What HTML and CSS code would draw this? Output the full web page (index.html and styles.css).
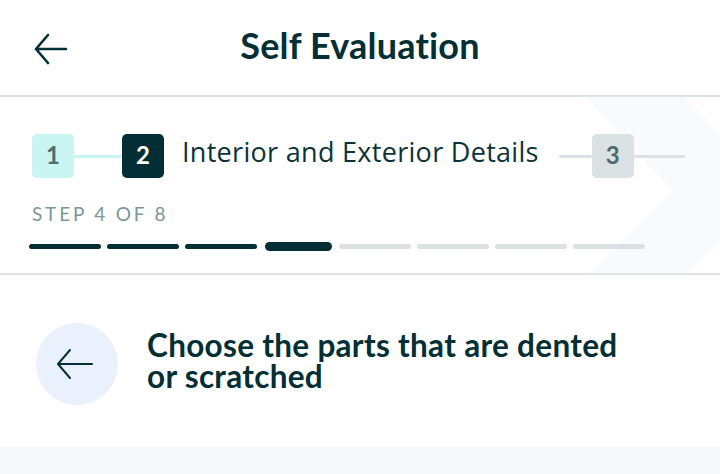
FILE: index.html
```
<!DOCTYPE html>
<html lang="en">
<head>
<meta charset="utf-8">
<title>Self Evaluation</title>
<link rel="stylesheet" href="styles.css">
</head>
<body>
<header class="topbar">
  <button class="back" aria-label="Back">
    <svg width="36" height="32" viewBox="0 0 36 32" fill="none" stroke="#042f34" stroke-width="2.6" stroke-linecap="round" stroke-linejoin="round">
      <path d="M33 16H3M15 2L3 16l12 14"/>
    </svg>
  </button>
  <h1 class="title">Self Evaluation</h1>
  <span class="spacer"></span>
</header>

<section class="stepper">
  <div class="steps">
    <span class="box done">1</span>
    <span class="line cyan"></span>
    <span class="box current">2</span>
    <span class="label">Interior and Exterior Details</span>
    <span class="line gray short"></span>
    <span class="box todo">3</span>
    <span class="line gray long"></span>
  </div>
  <div class="count">STEP 4 OF 8</div>
  <div class="progress">
    <span class="seg on"></span>
    <span class="seg on"></span>
    <span class="seg on"></span>
    <span class="seg active"></span>
    <span class="seg"></span>
    <span class="seg"></span>
    <span class="seg"></span>
    <span class="seg"></span>
  </div>
</section>

<main class="content">
  <button class="circle-back" aria-label="Previous">
    <svg width="40" height="34" viewBox="0 0 40 34" fill="none" stroke="#042f34" stroke-width="2" stroke-linecap="round" stroke-linejoin="round">
      <path d="M37 17H3M15 3L3 17l12 14"/>
    </svg>
  </button>
  <h2 class="question">Choose the parts that are dented<br>or scratched</h2>
</main>

<div class="band"></div>
</body>
</html>
```

FILE: styles.css
```
* { box-sizing: border-box; }
html, body { margin: 0; padding: 0; }
body {
  width: 720px;
  height: 474px;
  overflow: hidden;
  background: #ffffff;
  font-family: Lato, "Noto Sans", sans-serif;
  color: #042f34;
}

.topbar {
  height: 97px;
  border-bottom: 2px solid #dde4e6;
  display: grid;
  grid-template-columns: 1fr auto 1fr;
  align-items: center;
}
.back {
  justify-self: start;
  margin-left: 33px;
  margin-top: 2px;
  padding: 0;
  border: 0;
  background: none;
  display: flex;
}
.title {
  margin: -5px 0 0 0;
  font-size: 36px;
  font-weight: 700;
  letter-spacing: 0.2px;
  color: #042f34;
}

.stepper {
  position: relative;
  height: 178px;
  border-bottom: 2px solid #dde4e6;
  padding: 37px 0 0 32px;
  overflow: hidden;
}
.stepper::before {
  content: "";
  position: absolute;
  inset: 0;
  background: #f8fafd;
  clip-path: polygon(585px 0, 685px 0, 773px 93px, 685px 180px, 585px 180px, 672px 93px);
}
.steps {
  position: relative;
  display: flex;
  align-items: center;
  height: 44px;
}
.box {
  width: 42px;
  height: 44px;
  border-radius: 5px;
  display: flex;
  align-items: center;
  justify-content: center;
  font-size: 24px;
  font-weight: 700;
  padding-bottom: 4px;
}
.box.done { background: #c9f6f3; color: #4e6e70; }
.box.current { background: #032f34; color: #ffffff; }
.box.todo { background: #d9e1e2; color: #4a6b6d; }
.line { height: 3px; }
.line.cyan { width: 48px; background: #c9f6f3; }
.line.gray { background: #d9e1e2; border-radius: 2px; }
.line.short { width: 33px; margin-left: 20px; }
.line.long { width: 51px; }
.label {
  margin-left: 18px;
  font-family: "Open Sans", Lato, sans-serif;
  font-size: 27px;
  font-weight: 400;
  color: #0a3338;
  margin-top: -9px;
  letter-spacing: 0.3px;
}

.count {
  position: relative;
  margin-top: 25px;
  font-size: 19px;
  letter-spacing: 2.8px;
  color: #7b9697;
  line-height: 22px;
}

.progress {
  position: relative;
  margin-top: 17px;
  margin-left: -3px;
  display: flex;
  align-items: center;
  gap: 6px;
}
.seg {
  width: 72px;
  height: 5px;
  border-radius: 3px;
  background: #dbe1e2;
}
.seg.on { background: #032f34; }
.seg.active {
  width: 67px;
  height: 9px;
  border-radius: 5px;
  background: #032f34;
  margin: 0 1px 0 2px;
}

.content {
  height: 172px;
  display: flex;
  align-items: flex-start;
  padding: 48px 0 0 36px;
}
.circle-back {
  width: 82px;
  height: 82px;
  border-radius: 50%;
  background: #eaf1fd;
  border: 0;
  padding: 0 4px 0 0;
  display: flex;
  align-items: center;
  justify-content: center;
  flex-shrink: 0;
}
.question {
  margin: 7px 0 0 29px;
  font-size: 31.5px;
  line-height: 31px;
  font-weight: 700;
  letter-spacing: 0.3px;
  color: #042f34;
}

.band {
  height: 28px;
  background: #f7f8fa;
}
```
